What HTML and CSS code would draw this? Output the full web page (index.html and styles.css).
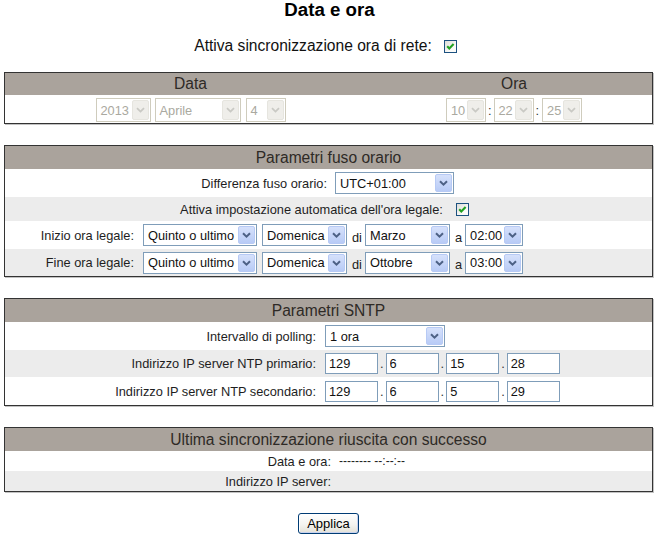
FILE: index.html
```html
<!DOCTYPE html>
<html lang="it">
<head>
<meta charset="utf-8">
<title>Data e ora</title>
<link rel="stylesheet" href="styles.css">
</head>
<body>
<h1 class="title">Data e ora</h1>

<div class="sync">
  <span>Attiva sincronizzazione ora di rete:</span>
  <span class="cb"><svg width="11" height="11" viewBox="0 0 11 11"><path d="M2.2 5.3 4.3 7.5 8.6 3.1" fill="none" stroke="#21a121" stroke-width="2.1"/></svg></span>
</div>

<section class="box">
  <div class="hd split"><div>Data</div><div>Ora</div></div>
  <div class="row split tall">
    <div class="grp date">
      <span class="sel dis w55"><span class="v">2013</span><span class="ar"><svg width="9" height="6" viewBox="0 0 9 6"><path d="M1 1.2 4.5 4.6 8 1.2" fill="none" stroke="#c9c9c4" stroke-width="1.8"/></svg></span></span>
      <span class="sel dis w86"><span class="v">Aprile</span><span class="ar"><svg width="9" height="6" viewBox="0 0 9 6"><path d="M1 1.2 4.5 4.6 8 1.2" fill="none" stroke="#c9c9c4" stroke-width="1.8"/></svg></span></span>
      <span class="sel dis w40"><span class="v">4</span><span class="ar"><svg width="9" height="6" viewBox="0 0 9 6"><path d="M1 1.2 4.5 4.6 8 1.2" fill="none" stroke="#c9c9c4" stroke-width="1.8"/></svg></span></span>
    </div>
    <div class="grp time">
      <span class="sel dis w40"><span class="v">10</span><span class="ar"><svg width="9" height="6" viewBox="0 0 9 6"><path d="M1 1.2 4.5 4.6 8 1.2" fill="none" stroke="#c9c9c4" stroke-width="1.8"/></svg></span></span>
      <span class="colon">:</span>
      <span class="sel dis w40"><span class="v">22</span><span class="ar"><svg width="9" height="6" viewBox="0 0 9 6"><path d="M1 1.2 4.5 4.6 8 1.2" fill="none" stroke="#c9c9c4" stroke-width="1.8"/></svg></span></span>
      <span class="colon">:</span>
      <span class="sel dis w40"><span class="v">25</span><span class="ar"><svg width="9" height="6" viewBox="0 0 9 6"><path d="M1 1.2 4.5 4.6 8 1.2" fill="none" stroke="#c9c9c4" stroke-width="1.8"/></svg></span></span>
    </div>
  </div>
</section>

<section class="box">
  <div class="hd big">Parametri fuso orario</div>
  <div class="row form tz tall">
    <div class="lbl">Differenza fuso orario:</div>
    <div class="ctl">
      <span class="sel w119"><span class="v">UTC+01:00</span><span class="ar"><svg width="9" height="6" viewBox="0 0 9 6"><path d="M1 1.2 4.5 4.6 8 1.2" fill="none" stroke="#4d6185" stroke-width="2"/></svg></span></span>
    </div>
  </div>
  <div class="row alt center mid">
    <span>Attiva impostazione automatica dell'ora legale:</span>
    <span class="cb"><svg width="11" height="11" viewBox="0 0 11 11"><path d="M2.2 5.3 4.3 7.5 8.6 3.1" fill="none" stroke="#21a121" stroke-width="2.1"/></svg></span>
  </div>
  <div class="row form dst tall">
    <div class="lbl">Inizio ora legale:</div>
    <div class="ctl">
      <span class="sel w114"><span class="v">Quinto o ultimo</span><span class="ar"><svg width="9" height="6" viewBox="0 0 9 6"><path d="M1 1.2 4.5 4.6 8 1.2" fill="none" stroke="#4d6185" stroke-width="2"/></svg></span></span>
      <span class="sel w85"><span class="v">Domenica</span><span class="ar"><svg width="9" height="6" viewBox="0 0 9 6"><path d="M1 1.2 4.5 4.6 8 1.2" fill="none" stroke="#4d6185" stroke-width="2"/></svg></span></span>
      <span class="word">di</span>
      <span class="sel w85"><span class="v">Marzo</span><span class="ar"><svg width="9" height="6" viewBox="0 0 9 6"><path d="M1 1.2 4.5 4.6 8 1.2" fill="none" stroke="#4d6185" stroke-width="2"/></svg></span></span>
      <span class="word">a</span>
      <span class="sel w58"><span class="v">02:00</span><span class="ar"><svg width="9" height="6" viewBox="0 0 9 6"><path d="M1 1.2 4.5 4.6 8 1.2" fill="none" stroke="#4d6185" stroke-width="2"/></svg></span></span>
    </div>
  </div>
  <div class="row alt form dst short">
    <div class="lbl">Fine ora legale:</div>
    <div class="ctl">
      <span class="sel w114"><span class="v">Quinto o ultimo</span><span class="ar"><svg width="9" height="6" viewBox="0 0 9 6"><path d="M1 1.2 4.5 4.6 8 1.2" fill="none" stroke="#4d6185" stroke-width="2"/></svg></span></span>
      <span class="sel w85"><span class="v">Domenica</span><span class="ar"><svg width="9" height="6" viewBox="0 0 9 6"><path d="M1 1.2 4.5 4.6 8 1.2" fill="none" stroke="#4d6185" stroke-width="2"/></svg></span></span>
      <span class="word">di</span>
      <span class="sel w85"><span class="v">Ottobre</span><span class="ar"><svg width="9" height="6" viewBox="0 0 9 6"><path d="M1 1.2 4.5 4.6 8 1.2" fill="none" stroke="#4d6185" stroke-width="2"/></svg></span></span>
      <span class="word">a</span>
      <span class="sel w58"><span class="v">03:00</span><span class="ar"><svg width="9" height="6" viewBox="0 0 9 6"><path d="M1 1.2 4.5 4.6 8 1.2" fill="none" stroke="#4d6185" stroke-width="2"/></svg></span></span>
    </div>
  </div>
</section>

<section class="box">
  <div class="hd big">Parametri SNTP</div>
  <div class="row form sntp tall">
    <div class="lbl">Intervallo di polling:</div>
    <div class="ctl">
      <span class="sel w120"><span class="v">1 ora</span><span class="ar"><svg width="9" height="6" viewBox="0 0 9 6"><path d="M1 1.2 4.5 4.6 8 1.2" fill="none" stroke="#4d6185" stroke-width="2"/></svg></span></span>
    </div>
  </div>
  <div class="row alt form sntp short">
    <div class="lbl">Indirizzo IP server NTP primario:</div>
    <div class="ctl">
      <input class="ip" type="text" value="129"><span class="dot">.</span><input class="ip" type="text" value="6"><span class="dot">.</span><input class="ip" type="text" value="15"><span class="dot">.</span><input class="ip" type="text" value="28">
    </div>
  </div>
  <div class="row form sntp tall">
    <div class="lbl">Indirizzo IP server NTP secondario:</div>
    <div class="ctl">
      <input class="ip" type="text" value="129"><span class="dot">.</span><input class="ip" type="text" value="6"><span class="dot">.</span><input class="ip" type="text" value="5"><span class="dot">.</span><input class="ip" type="text" value="29">
    </div>
  </div>
</section>

<section class="box">
  <div class="hd big">Ultima sincronizzazione riuscita con successo</div>
  <div class="row form last thin">
    <div class="lbl">Data e ora:</div>
    <div class="ctl val">-------- --:--:--</div>
  </div>
  <div class="row alt form last thin">
    <div class="lbl">Indirizzo IP server:</div>
    <div class="ctl val"></div>
  </div>
</section>

<div class="actions"><button class="btn" type="button">Applica</button></div>
</body>
</html>
```
FILE: styles.css
```css
* { box-sizing: border-box; }

body {
  margin: 0;
  width: 659px;
  background: #fff;
  color: #1e1e1e;
  font-family: "Liberation Sans", Arial, sans-serif;
  font-size: 12.8px;
}

.title {
  margin: 0;
  font-size: 18.7px;
  line-height: 20px;
  font-weight: bold;
  text-align: center;
  color: #000;
}

.sync {
  width: 651px;
  margin-top: 16px;
  height: 20px;
  display: flex;
  justify-content: center;
  align-items: center;
  gap: 12px;
  font-size: 15.6px;
  color: #111;
}

.cb {
  width: 13px;
  height: 13px;
  border: 1px solid #1c5180;
  background: linear-gradient(135deg, #dcdcd7, #fbfbf9 70%);
  display: inline-flex;
  align-items: center;
  justify-content: center;
  flex: none;
}

.box {
  width: 649px;
  margin: 16px 0 0 4px;
  border: 1px solid #333;
  box-shadow: 1px 1px 0 #c2c2c2;
}
.box + .box { margin-top: 21px; }

.hd {
  background: #aaa39c;
  color: #2e2a26;
  font-size: 15.6px;
  height: 22px;
  line-height: 22px;
  text-align: center;
}
.hd.big { height: 23px; line-height: 23px; }

.split {
  display: grid;
  grid-template-columns: 371px 276px;
}

.row { background: #fff; }
.row.alt { background: #ececec; }
.row.tall { height: 28px; }
.row.short { height: 27px; }
.row.mid { height: 24px; }
.row.thin { height: 20px; }

.grp {
  display: flex;
  align-items: baseline;
  justify-content: center;
  padding-top: 2px;
  align-self: center;
}
.date .sel + .sel { margin-left: 4px; }
.date .sel.w40 { margin-left: 5px; }
.colon { margin: 0 2px 0 2px; color: #333; }
.colon + .sel + .colon { margin-right: 3px; }

.center {
  display: flex;
  justify-content: center;
  align-items: center;
  gap: 13px;
  padding-right: 8px;
}

.form {
  display: grid;
  align-items: center;
}
.form .lbl {
  text-align: right;
  padding-right: 4px;
  white-space: nowrap;
}
.form .ctl {
  display: flex;
  align-items: baseline;
}
.tz { grid-template-columns: 326px 1fr; }
.tz .ctl { padding-left: 4px; }
.dst { grid-template-columns: 133px 1fr; }
.dst .ctl { padding-left: 5px; }
.dst .sel + .sel { margin-left: 5px; }
.word { margin: 0 3px 0 5px; position: relative; top: 2px; color: #222; }
.sntp { grid-template-columns: 315px 1fr; }
.sntp .ctl { padding-left: 5px; }
.last { grid-template-columns: 330px 1fr; }
.last .ctl { padding-left: 4px; }
.val { font-size: 12px; color: #222; }

.sel {
  display: inline-flex;
  align-items: center;
  height: 22px;
  padding: 1px;
  border: 1px solid #7f9db9;
  background: #fff;
  flex: none;
}
.sel .v {
  flex: 1;
  min-width: 0;
  padding-left: 3px;
  white-space: nowrap;
  overflow: hidden;
  color: #111;
}
.sel .ar {
  width: 17px;
  height: 18px;
  flex: none;
  display: flex;
  align-items: center;
  justify-content: center;
  border: 1px solid #b7caf5;
  border-radius: 2px;
  background: linear-gradient(#d6e1fb, #b8cbf6);
}
.sel.dis {
  height: 24px;
  border-color: #cfccbd;
}
.sel.dis .v { color: #aaa9a0; }
.sel.dis .ar {
  height: 20px;
  border-color: #e6e5df;
  background: #efeeea;
}

.w40 { width: 40px; }
.w55 { width: 55px; }
.w58 { width: 58px; }
.w85 { width: 85px; }
.w86 { width: 86px; }
.w114 { width: 114px; }
.w119 { width: 119px; }
.w120 { width: 120px; }

.ip {
  width: 53px;
  height: 21px;
  margin: 0;
  padding: 0 3px;
  border: 1px solid #7f9db9;
  background: #fff;
  font: inherit;
  color: #111;
  outline: none;
}
.dot { margin: 0 2px; color: #333; }

.actions {
  width: 657px;
  margin-top: 21px;
  text-align: center;
}
.btn {
  width: 61px;
  height: 21px;
  padding: 0;
  border: 1px solid #003c74;
  border-radius: 3px;
  background: linear-gradient(#ffffff, #f4f4f0 55%, #e3e1d7);
  box-shadow: inset -1px -1px 0 #c8d2ee, inset 1px 1px 0 #fff;
  font-family: "Liberation Sans", Arial, sans-serif;
  font-size: 13px;
  color: #000;
}
```
